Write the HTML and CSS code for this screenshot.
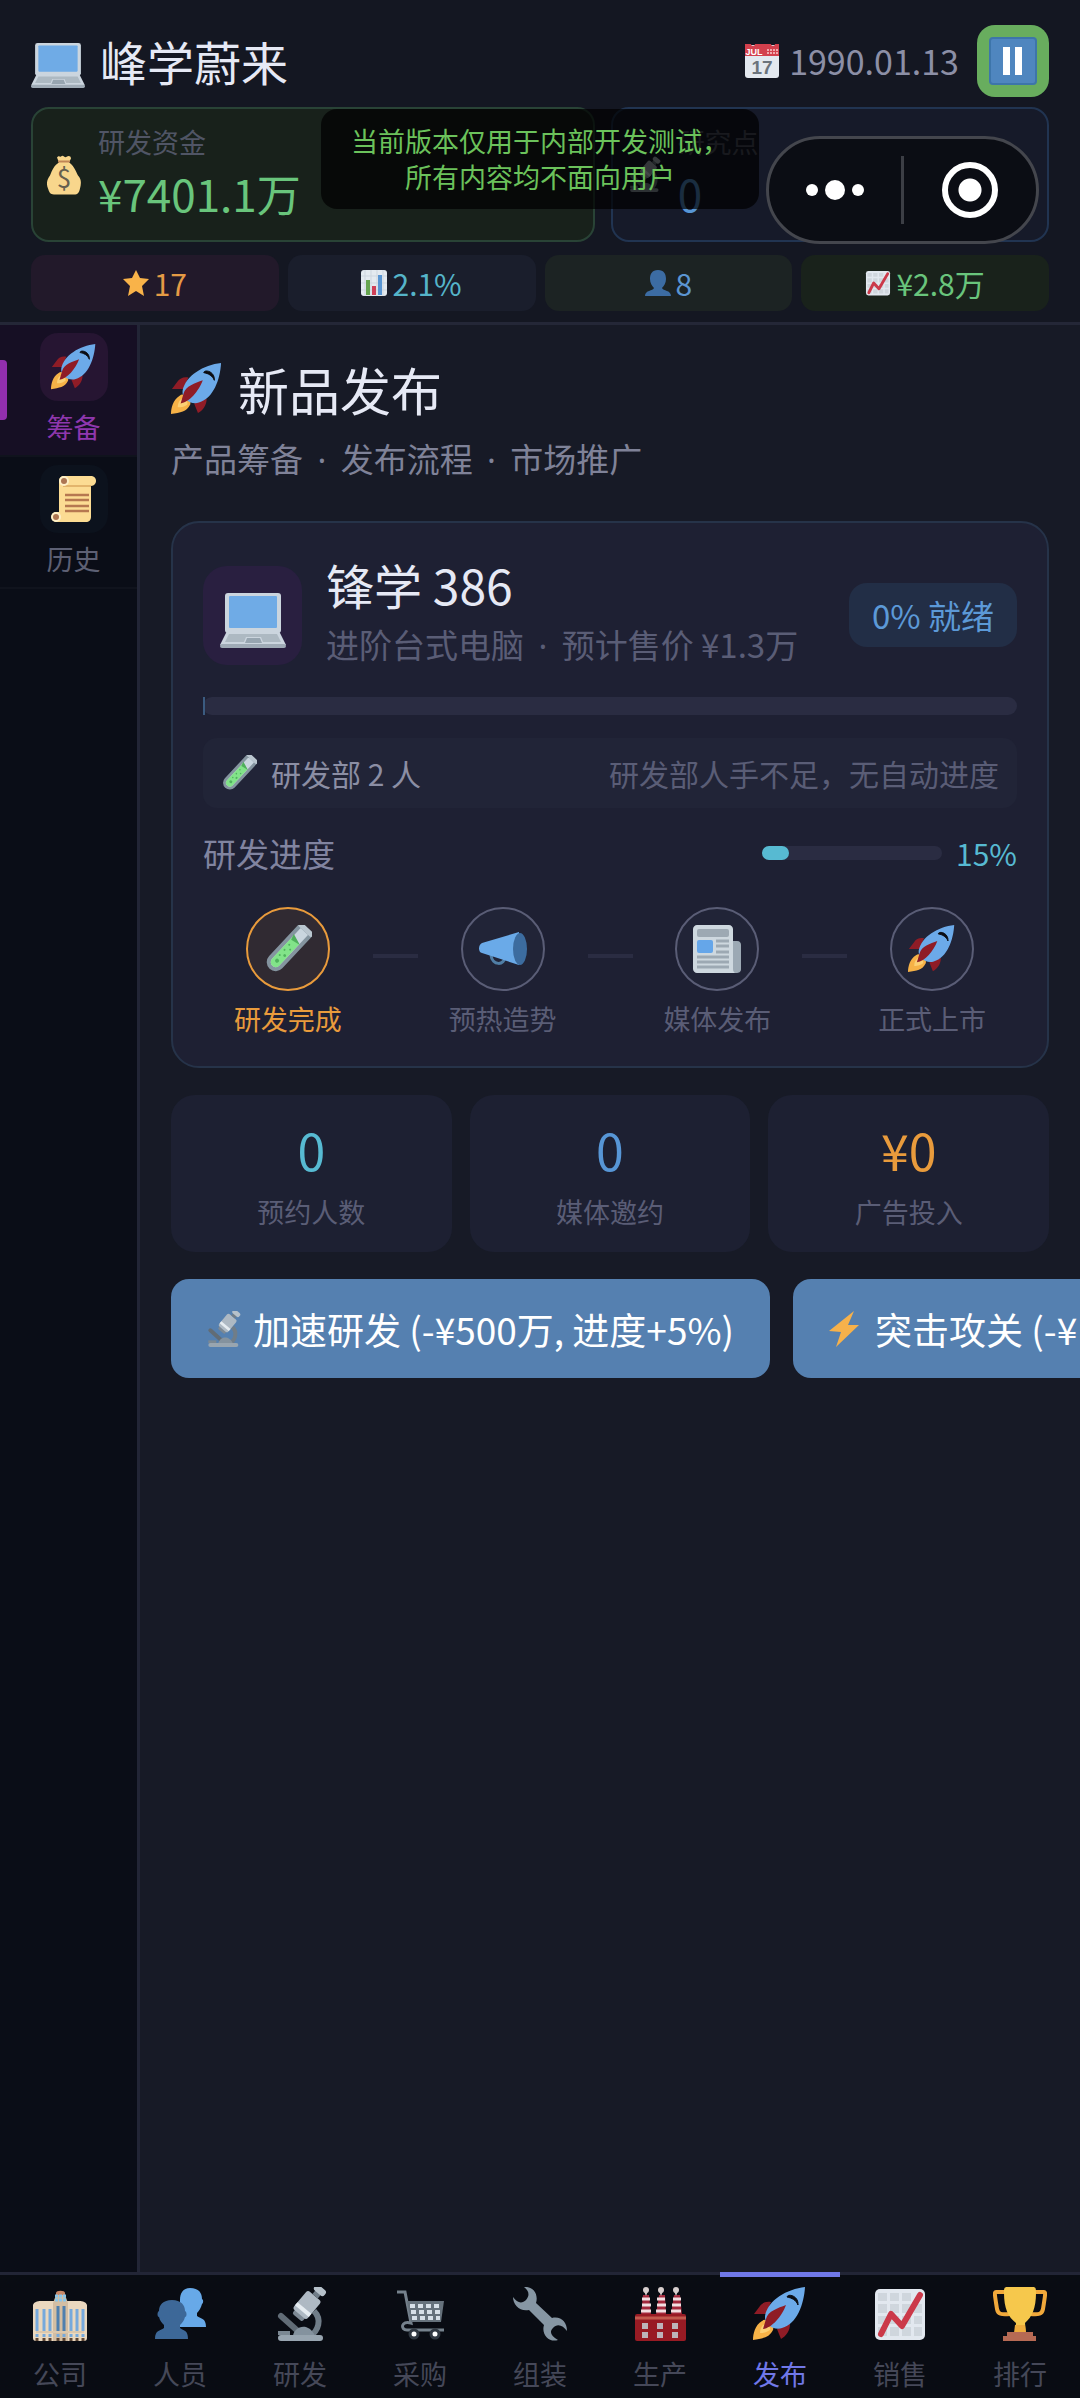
FILE: index.html
```html
<!DOCTYPE html>
<html lang="zh-CN">
<head>
  <meta charset="UTF-8" />
  <meta name="viewport" content="width=device-width, initial-scale=1.0"/>
  <title>峰学蔚来</title>
  <link rel="stylesheet" href="styles.css">
</head>
<body>
  <!-- icon sprite -->
  <svg class="sprite" aria-hidden="true">
    <symbol id="laptop" viewBox="0 -11 66 66">
      <rect x="5" y="0" width="56" height="40" rx="3" fill="#cbd5de"/>
      <rect x="9" y="3" width="48" height="32" rx="1" fill="#6fabe6"/>
      <path d="M7 38h52l7 14H0z" fill="#cbd5de"/>
      <path d="M9 41h48l4 8H43l-2-5H26l-2 5H5z" fill="#adb9c2"/>
      <path d="M27 45h13l2 5H25z" fill="#97a5b0"/>
      <rect x="0" y="51" width="66" height="4" rx="2" fill="#9fabb6"/>
    </symbol>
    <symbol id="moneybag" viewBox="0 0 34 39">
      <path d="M10 2c2-3 3 0 4-1s2-1 3 0 2 1 3 0 4-1 4 2l-2 4c5 3 7 9 9 13 4 4 3 9 2 13-1 4-2 6-6 6H7c-4 0-5-3-6-6-2-5-1-9 2-13 2-5 4-10 9-13z" fill="#f8d68c"/>
      <path d="M11 6h12" stroke="#c08556" stroke-width="2"/>
      <text x="17" y="32" text-anchor="middle" class="icon-dollar">$</text>
    </symbol>
    <symbol id="star" viewBox="0 0 26 26">
      <path d="M13 0l4 8 9 1-7 7 2 10-8-5-8 5 2-10-7-7 9-1z" fill="#f9b349"/>
    </symbol>
    <symbol id="bars" viewBox="0 0 26 26">
      <rect width="26" height="26" rx="3" fill="#e4eaf0"/>
      <path d="M4 0v26M10 0v26M16 0v26M22 0v26M0 6h26M0 13h26M0 20h26" stroke="#cdd6df" stroke-width="1"/>
      <path d="M5 10h4v15H5z" fill="#66a550"/><path d="M11 16h4v9h-4z" fill="#cf3f57"/><path d="M17 5h4v20h-4z" fill="#5a96d3"/>
    </symbol>
    <symbol id="person" viewBox="0 0 26 26">
      <path d="M13 0c6 0 8 4 8 9 0 4-2 7-4 9 1 3 9 2 9 8H0c0-6 8-5 9-8-2-2-4-5-4-9 0-5 2-9 8-9z" fill="#3c6ca3"/>
    </symbol>
    <symbol id="people" viewBox="0 0 54 54">
      <path d="M37 1c9 0 12 5 12 11 2 1 1 5 0 5-1 4-3 7-5 9v3c4 3 9 2 9 11H27V13C27 6 30 1 37 1z" fill="#67a9e8"/>
      <path d="M19 13c9 0 13 5 13 11 2 1 2 6 0 6-1 4-3 6-5 8v3c4 3 8 2 8 11H2c0-9 5-8 9-11v-3c-2-2-4-4-5-8-2 0-2-5 0-6 0-6 4-11 13-11z" fill="#3d6898"/>
    </symbol>
    <symbol id="chart" viewBox="0 0 54 54">
      <rect x="2" y="2" width="50" height="51" rx="5" fill="#e2e8ef"/>
      <g fill="#cfd6dd">
        <path d="M5 6h9v8H5zM17 6h9v8h-9zM29 6h9v8h-9zM5 17h9v9H5zM17 17h9v9h-9zM29 17h9v9h-9zM41 17h8v9h-8zM5 29h9v8H5zM17 29h9v8h-9zM29 29h9v8h-9zM41 29h8v8h-8zM5 40h9v9H5zM17 40h9v9h-9zM29 40h9v9h-9zM41 40h8v9h-8z"/>
      </g>
      <path d="M8 47l10-20 11 12L47 8" fill="none" stroke="#cb3949" stroke-width="6" stroke-linecap="round" stroke-linejoin="round"/>
    </symbol>
    <symbol id="calendar" viewBox="0 0 34 34">
      <rect y="1" width="34" height="33" rx="3" fill="#e3e8ef"/>
      <path d="M0 0h6a2 2 0 0 0 4 0h16a2 2 0 0 0 4 0h4v12H0z" fill="#d3404d"/>
      <path d="M22 6h11M22 9h11" stroke="#f0a9ad" stroke-width="2" stroke-dasharray="2 1"/>
      <text x="9" y="11" text-anchor="middle" class="icon-month">JUL</text>
      <text x="17" y="30" text-anchor="middle" class="icon-day">17</text>
    </symbol>
    <symbol id="pause" viewBox="0 0 48 48">
      <rect x="1" y="1" width="46" height="46" rx="3" fill="#4f86bf" stroke="#3d75aa" stroke-width="2"/>
      <path d="M14 10h7v28h-7zM26 10h7v28h-7z" fill="#fff"/>
    </symbol>
    <symbol id="rocket" viewBox="0 0 54 54">
      <path d="M18 15c-5-1-9 1-11 4L1 27h12zM24 42l4 10c5-3 9-8 9-15z" fill="#8f1c26"/>
      <path d="M9 34c4-4 13 3 11 9-4 8-10 8-20 10 0-6 2-15 9-19z" fill="#f6b247"/>
      <path d="M10 38c4-2 8 2 7 5-4 3-8 3-10 3 0-3 1-6 3-8z" fill="#fbd074"/>
      <path d="M52 0C34 2 15 13 12 29c-1 8 9 15 17 12C44 37 51 17 52 0z" fill="#6caae9"/>
      <path d="M33 18c-8 3-18 6-20 14l-3 10c9-1 19-13 23-24z" fill="#8f1c26"/>
      <path d="M34 10c1-4 12-1 11 8-2-5-6-7-11-8z" fill="#0b0d13" stroke="#0b0d13" stroke-width="1"/>
    </symbol>
    <symbol id="scroll" viewBox="0 0 46 46">
      <path d="M13 0h28c6 1 5 10-1 10v31c0 3-2 5-5 5H5c-6-1-6-10 0-10h3V5c0-3 2-5 5-5z" fill="#fcdc93"/>
      <path d="M12 10h28" stroke="#e3b56c" stroke-width="2"/>
      <circle cx="5" cy="41" r="5" fill="#fff0c8"/><circle cx="5" cy="41" r="3" fill="#ad7652"/>
      <circle cx="13" cy="5" r="5" fill="#fff0c8"/><circle cx="13" cy="5" r="3" fill="#ad7652"/>
      <path d="M14 19h24M14 24h24M14 30h24M14 35h24" stroke="#b67850" stroke-width="2.5"/>
    </symbol>
    <symbol id="tube" viewBox="0 0 48 48">
      <g transform="rotate(43 24 24)">
        <path d="M17-2h14v44a7 7 0 0 1-14 0z" fill="#c9d5de" stroke="#84949f" stroke-width="4"/>
        <path d="M19 10l10 3v29a5 5 0 0 1-10 0z" fill="#82e389"/>
        <path d="M18 9l12 4-10 2z" fill="#4fae5c"/>
        <rect x="15" y="-5" width="18" height="5" rx="2" fill="#bac6cf"/>
        <g fill="#50b25e"><circle cx="22" cy="20" r="1"/><circle cx="26" cy="23" r="1"/><circle cx="22" cy="27" r="1"/><circle cx="26" cy="31" r="1.4"/><circle cx="22" cy="34" r="1"/><circle cx="24" cy="40" r="2"/></g>
      </g>
    </symbol>
    <symbol id="megaphone" viewBox="0 0 48 48">
      <path d="M12 30c1 11 14 11 14 1" fill="none" stroke="#507ea5" stroke-width="3"/>
      <path d="M3 18L40 7v33L3 28c-4-1-4-8 0-10z" fill="#6aaae8"/>
      <ellipse cx="41" cy="24" rx="7" ry="16" fill="#3c6c9f"/>
    </symbol>
    <symbol id="news" viewBox="0 0 48 48">
      <path d="M36 16h8c3 0 4 2 4 4v24c0 3-2 4-5 4h-7z" fill="#9ca9b4"/>
      <path d="M4 0h32c2 0 4 2 4 4v40c0 2 1 4 3 4H4c-2 0-4-2-4-4V4c0-2 2-4 4-4z" fill="#ced8df"/>
      <rect x="4" y="4" width="32" height="8" rx="2" fill="#9da9b3"/>
      <rect x="4" y="15" width="16" height="13" rx="2" fill="#65a6e9"/>
      <path d="M23 16h13M23 21h13M23 27h13M4 32h32M4 37h32M4 42h32" stroke="#9da9b3" stroke-width="3"/>
    </symbol>
    <symbol id="microscope" viewBox="0 0 54 54">
      <path d="M41 24c8 8 5 20-5 26" fill="none" stroke="#707d88" stroke-width="6"/>
      <path d="M8 29l19 17" stroke="#616c76" stroke-width="6" stroke-linecap="round"/>
      <path d="M5 46h12" stroke="#7b8893" stroke-width="4"/>
      <path d="M20 49c1-9 15-15 22 0z" fill="#84929e"/>
      <rect x="5" y="48" width="45" height="6" rx="3" fill="#98a5b0"/>
      <g transform="rotate(40 34 18)">
        <rect x="28" y="26" width="13" height="8" rx="2" fill="#7d8994"/>
        <rect x="25" y="6" width="18" height="24" rx="3" fill="#aeb9c3"/>
        <rect x="25" y="22" width="18" height="4" fill="#e5ecf1"/>
        <rect x="31" y="-1" width="7" height="7" fill="#707d88"/>
        <rect x="28" y="-5" width="13" height="7" rx="3" fill="#b6c1ca"/>
      </g>
    </symbol>
    <symbol id="bolt" viewBox="0 0 36 36">
      <path d="M27 0L2 20l12 1L9 36l23-22H21z" fill="#f6b14b"/>
    </symbol>
    <symbol id="office" viewBox="0 0 54 54">
      <path d="M0 18c1-3 4-4 8-4h13v40H3c-2 0-3-1-3-3zM33 14h13c4 0 7 1 8 4v33c0 2-1 3-3 3H33z" fill="#ead8bf"/>
      <path d="M23 8c1-4 7-4 9 0l3 8v38H20V16z" fill="#d3bea3"/>
      <path d="M23 6c0-3 9-3 9 0v2h-9z" fill="#c88968"/>
      <path d="M22 9h11M22 13h11" stroke="#8ac6ea" stroke-width="3" stroke-dasharray="3 1"/>
      <path d="M4 22v22M11 22v22M17 22v22M38 22v22M44 22v22M50 22v22" stroke="#76a9dc" stroke-width="3"/>
      <path d="M25 19v25M31 19v25" stroke="#4e7fae" stroke-width="3"/>
      <path d="M3 45h48" stroke="#dcc8ad" stroke-width="2"/>
      <path d="M4 47v3M11 47v3M17 47v3M25 47v3M31 47v3M38 47v3M44 47v3M50 47v3" stroke="#76a9dc" stroke-width="3"/>
      <path d="M4 51v3M11 51v3M17 51v3M25 51v3M31 51v3M38 51v3M44 51v3M50 51v3" stroke="#5c4636" stroke-width="3"/>
    </symbol>
    <symbol id="cart" viewBox="0 0 54 54">
      <path d="M4 5h8l6 31c-10-3-11 7-4 7h37" fill="none" stroke="#75818c" stroke-width="3"/>
      <path d="M14 14h37l-3 21H18z" fill="#66727c"/>
      <path d="M17 19h32M18 25h30M19 31h28" stroke="#d7e0e8" stroke-width="4" stroke-dasharray="5 3"/>
      <circle cx="21" cy="47" r="4" fill="#fff" stroke="#303842" stroke-width="3"/>
      <circle cx="42" cy="47" r="4" fill="#fff" stroke="#303842" stroke-width="3"/>
    </symbol>
    <symbol id="wrench" viewBox="0 0 54 54">
      <path d="M11 0c8-1 15 6 12 16l16 15c9-2 15 4 15 13-4-6-10-8-14-3-4 4-2 8 5 12-9 3-17-6-14-15L16 23C7 25 0 18 0 10c4 6 9 7 13 3 4-5 3-9-2-13z" fill="#8696a3"/>
    </symbol>
    <symbol id="factory" viewBox="0 0 54 54">
      <path d="M10 8h6l2 20H8zM26 8h6l1 20H23zM41 8h6l2 20H38z" fill="#a3283c"/>
      <path d="M9 12h8M9 18h9M8 24h10M24 12h8M24 18h9M23 24h10M40 12h8M39 18h9M38 24h10" stroke="#f2dfe2" stroke-width="3"/>
      <g fill="#d8cfce"><circle cx="13" cy="3" r="3"/><circle cx="28" cy="3" r="3"/><circle cx="43" cy="3" r="3"/><path d="M11 4h4l-2 5zM26 4h4l-2 5zM41 4h4l-2 5z"/></g>
      <rect x="2" y="27" width="51" height="27" rx="2" fill="#981b24"/>
      <path d="M2 31h51" stroke="#c25a4e" stroke-width="3"/>
      <path d="M9 36h6v6H9zM24 36h6v6h-6zM39 36h6v6h-6zM9 45h6v6H9zM24 45h6v6h-6zM39 45h6v6h-6z" fill="#bdb4ba"/>
    </symbol>
    <symbol id="trophy" viewBox="0 0 54 54">
      <path d="M14 5H3c-2 0-1 4 1 17 1 5 4 6 13 5M40 5h11c2 0 1 4-1 17-1 5-4 6-13 5" fill="none" stroke="#f1a93b" stroke-width="4"/>
      <path d="M14 0h26c3 0 3 2 3 6 0 15-4 24-11 30l1 11H22l1-11C15 30 11 21 11 6c0-4 0-6 3-6z" fill="#f6c84c"/>
      <path d="M22 38h10l1 8H21z" fill="#efad3c"/>
      <path d="M14 45h26v4h3v5H10v-5h4z" fill="#b66a54"/>
    </symbol>
  </svg>

  <header class="header">
    <div class="title-row">
      <h1 class="brand"><svg class="icon icon-lg"><use href="#laptop"/></svg>峰学蔚来</h1>
      <div class="clock">
        <span class="date"><svg class="icon icon-date"><use href="#calendar"/></svg>1990.01.13</span>
        <button class="pause" aria-label="暂停"><svg class="icon icon-pause"><use href="#pause"/></svg></button>
      </div>
    </div>
    <div class="resources">
      <div class="resource money">
        <svg class="icon icon-res"><use href="#moneybag"/></svg>
        <div><div class="resource-label">研发资金</div><div class="resource-value">¥7401.1万</div></div>
      </div>
      <div class="resource points">
        <svg class="icon icon-res"><use href="#microscope"/></svg>
        <div><div class="resource-label">研究点</div><div class="resource-value">0</div></div>
      </div>
    </div>
    <div class="pills">
      <div class="pill pill-star"><svg class="icon icon-pill"><use href="#star"/></svg>17</div>
      <div class="pill pill-share"><svg class="icon icon-pill"><use href="#bars"/></svg>2.1%</div>
      <div class="pill pill-staff"><svg class="icon icon-pill"><use href="#person"/></svg>8</div>
      <div class="pill pill-income"><svg class="icon icon-pill"><use href="#chart"/></svg>¥2.8万</div>
    </div>

    <!-- overlays above the header -->
    <div class="notice">当前版本仅用于内部开发测试，<br>所有内容均不面向用户</div>
    <div class="capsule">
      <button class="capsule-btn" aria-label="更多"><i class="dot"></i><i class="dot dot-big"></i><i class="dot"></i></button>
      <span class="capsule-line"></span>
      <button class="capsule-btn" aria-label="关闭"><i class="target"></i></button>
    </div>
  </header>

  <div class="body">
    <aside class="sidebar">
      <button class="side-item active"><span class="side-icon"><svg class="icon icon-side"><use href="#rocket"/></svg></span>筹备</button>
      <button class="side-item"><span class="side-icon"><svg class="icon icon-side"><use href="#scroll"/></svg></span>历史</button>
    </aside>

    <main class="content">
      <h2 class="page-title"><svg class="icon icon-title"><use href="#rocket"/></svg>新品发布</h2>
      <p class="page-sub">产品筹备 <span class="sep">·</span> 发布流程 <span class="sep">·</span> 市场推广</p>

      <section class="product">
        <div class="product-head">
          <div class="product-icon"><svg class="icon icon-product"><use href="#laptop"/></svg></div>
          <div class="product-info">
            <h3 class="product-name">锋学 386</h3>
            <p class="product-sub">进阶台式电脑 <span class="sep">·</span> 预计售价 ¥1.3万</p>
          </div>
          <span class="badge">0% 就绪</span>
        </div>
        <div class="progress"><div class="progress-fill"></div></div>
        <div class="team">
          <span class="team-size"><svg class="icon icon-team"><use href="#tube"/></svg>研发部 2 人</span>
          <span class="team-note">研发部人手不足，无自动进度</span>
        </div>
        <div class="rd">
          <span class="rd-label">研发进度</span>
          <div class="rd-bar"><div class="rd-fill" style="width: 15%"></div></div>
          <span class="rd-value">15%</span>
        </div>
        <div class="steps">
          <div class="step active"><span class="step-icon"><svg class="icon icon-step"><use href="#tube"/></svg></span>研发完成</div>
          <span class="step-line"></span>
          <div class="step"><span class="step-icon"><svg class="icon icon-step"><use href="#megaphone"/></svg></span>预热造势</div>
          <span class="step-line"></span>
          <div class="step"><span class="step-icon"><svg class="icon icon-step"><use href="#news"/></svg></span>媒体发布</div>
          <span class="step-line"></span>
          <div class="step"><span class="step-icon"><svg class="icon icon-step"><use href="#rocket"/></svg></span>正式上市</div>
        </div>
      </section>

      <section class="stats">
        <div class="stat"><div class="stat-value cyan">0</div><div class="stat-label">预约人数</div></div>
        <div class="stat"><div class="stat-value blue">0</div><div class="stat-label">媒体邀约</div></div>
        <div class="stat"><div class="stat-value orange">¥0</div><div class="stat-label">广告投入</div></div>
      </section>

      <div class="actions">
        <button class="action"><svg class="icon icon-action"><use href="#microscope"/></svg>加速研发 (-¥500万, 进度+5%)</button>
        <button class="action"><svg class="icon icon-action"><use href="#bolt"/></svg>突击攻关 (-¥</button>
      </div>
    </main>
  </div>

  <nav class="tabs">
    <a class="tab" href="#company"><svg class="icon icon-lg"><use href="#office"/></svg>公司</a>
    <a class="tab" href="#staff"><svg class="icon icon-lg"><use href="#people"/></svg>人员</a>
    <a class="tab" href="#research"><svg class="icon icon-lg"><use href="#microscope"/></svg>研发</a>
    <a class="tab" href="#purchase"><svg class="icon icon-lg"><use href="#cart"/></svg>采购</a>
    <a class="tab" href="#assembly"><svg class="icon icon-lg"><use href="#wrench"/></svg>组装</a>
    <a class="tab" href="#production"><svg class="icon icon-lg"><use href="#factory"/></svg>生产</a>
    <a class="tab active" href="#release"><svg class="icon icon-lg"><use href="#rocket"/></svg>发布</a>
    <a class="tab" href="#sales"><svg class="icon icon-lg"><use href="#chart"/></svg>销售</a>
    <a class="tab" href="#ranking"><svg class="icon icon-lg"><use href="#trophy"/></svg>排行</a>
  </nav>
</body>
</html>
```
FILE: styles.css
```css
* {
  box-sizing: border-box;
}

body {
  margin: 0;
  min-height: 100vh;
  display: flex;
  flex-direction: column;
  overflow-x: hidden;
  background-color: #171a26;
  color: #e6e9f5;
  font-family: "Noto Sans CJK SC", sans-serif;
  font-size: 27px;
  line-height: 36px;
}

h1, h2, h3, p {
  margin: 0;
  font-weight: normal;
}

button {
  font: inherit;
  color: inherit;
  border: none;
  padding: 0;
  background: none;
  cursor: pointer;
}

/* icons */
.sprite {
  display: none;
}

.icon {
  display: block;
  flex: none;
}

.icon-lg { width: 54px; height: 54px; }
.icon-date { width: 34px; height: 34px; }
.icon-pause { width: 48px; height: 48px; }
.icon-res { width: 34px; height: 40px; }
.icon-pill { width: 26px; height: 26px; }
.icon-side { width: 46px; height: 46px; }
.icon-title { width: 52px; height: 52px; }
.icon-product { width: 66px; height: 66px; }
.icon-team { width: 36px; height: 36px; }
.icon-step { width: 48px; height: 48px; }
.icon-action { width: 36px; height: 36px; }

.icon-dollar {
  font: 26px "Noto Sans CJK SC", sans-serif;
  fill: #66604f;
}

.icon-month {
  font: bold 9px "Liberation Sans", sans-serif;
  fill: #fff;
}

.icon-day {
  font: bold 19px "Liberation Sans", sans-serif;
  fill: #6b737c;
}

/* header */
.header {
  position: relative;
  padding: 25px 31px 11px;
  background-color: #141722;
  border-bottom: 3px solid #242737;
}

.title-row {
  display: flex;
  align-items: center;
  justify-content: space-between;
  height: 72px;
}

.brand {
  display: flex;
  align-items: center;
  gap: 15px;
  font-size: 47px;
  line-height: 54px;
}

.clock,
.date {
  display: flex;
  align-items: center;
}

.clock {
  gap: 18px;
}

.date {
  gap: 10px;
  font-size: 34px;
  color: #8c8fa6;
}

.pause {
  display: flex;
  align-items: center;
  justify-content: center;
  width: 72px;
  height: 72px;
  border-radius: 18px;
  background-color: #68ad5e;
}

.resources {
  display: grid;
  grid-template-columns: 9fr 7fr;
  gap: 16px;
  margin-top: 10px;
}

.resource {
  display: flex;
  align-items: center;
  gap: 17px;
  height: 135px;
  padding: 0 14px;
  border: 2px solid;
  border-radius: 18px;
}

.money {
  background-color: #18211b;
  border-color: #294336;
  color: #69c57c;
}

.points {
  background-color: #161a29;
  border-color: #213451;
  color: #5796d6;
}

.resource-label {
  color: #505565;
}

.resource-value {
  font-size: 44px;
  line-height: 66px;
}

.pills {
  display: grid;
  grid-template-columns: repeat(4, 1fr);
  gap: 9px;
  margin-top: 13px;
}

.pill {
  display: flex;
  align-items: center;
  justify-content: center;
  gap: 5px;
  height: 56px;
  border-radius: 14px;
  font-size: 30px;
}

.pill-star { background-color: #22192a; color: #e59b45; }
.pill-share { background-color: #1a1e2c; color: #55b4c9; }
.pill-staff { background-color: #1c2323; color: #5b95d1; }
.pill-income { background-color: #19221b; color: #69c57c; }

.notice {
  position: absolute;
  top: 109px;
  left: 50%;
  transform: translateX(-50%);
  padding: 14px 30px;
  border-radius: 16px;
  background-color: rgba(0, 0, 0, 0.7);
  color: #6bc25b;
  text-align: center;
  white-space: nowrap;
}

.capsule {
  position: absolute;
  top: 136px;
  right: 41px;
  display: flex;
  align-items: center;
  width: 273px;
  height: 108px;
  border: 3px solid #44464d;
  border-radius: 54px;
  background-color: #0b0d14;
}

.capsule-btn {
  flex: 1;
  display: flex;
  align-items: center;
  justify-content: center;
  gap: 7px;
  height: 100%;
}

.capsule-line {
  width: 3px;
  height: 68px;
  background-color: #3c3e45;
}

.dot {
  width: 12px;
  height: 12px;
  border-radius: 50%;
  background-color: #fff;
}

.dot-big {
  width: 20px;
  height: 20px;
}

.target {
  width: 56px;
  height: 56px;
  border: 6px solid #fff;
  border-radius: 50%;
  background: radial-gradient(circle, #fff 11px, transparent 12px);
}

/* sidebar + content */
.body {
  flex: 1;
  display: flex;
  min-width: 0;
}

.sidebar {
  flex: none;
  width: 140px;
  background-color: #0a0d17;
  border-right: 3px solid #222536;
}

.side-item {
  position: relative;
  display: flex;
  flex-direction: column;
  align-items: center;
  gap: 8px;
  width: 100%;
  padding: 8px 0 10px 10px;
  border-bottom: 2px solid #10131d;
  color: #5d6074;
}

.side-icon {
  display: flex;
  align-items: center;
  justify-content: center;
  width: 68px;
  height: 68px;
  border-radius: 18px;
  background-color: #0c121d;
}

.side-item.active {
  background-color: #160f24;
  color: #8f37ae;
}

.side-item.active .side-icon {
  background-color: #261532;
}

.side-item.active::before {
  content: "";
  position: absolute;
  left: 0;
  top: 35px;
  width: 7px;
  height: 60px;
  border-radius: 0 4px 4px 0;
  background-color: #922fae;
}

.content {
  flex: 1;
  min-width: 0;
  padding: 29px 31px;
}

.page-title {
  display: flex;
  align-items: center;
  gap: 15px;
  font-size: 51px;
  line-height: 70px;
}

.page-sub {
  margin-top: 14px;
  font-size: 33px;
  line-height: 40px;
  color: #7f8298;
}

.sep {
  margin: 0 7px;
  font-family: "Noto Sans", sans-serif;
}

.product {
  margin-top: 41px;
  padding: 31px 30px 29px;
  border: 2px solid #263349;
  border-radius: 28px;
  background-color: #1e2033;
}

.product-head {
  display: flex;
  align-items: center;
}

.product-icon {
  display: flex;
  align-items: center;
  justify-content: center;
  width: 99px;
  height: 99px;
  margin-right: 24px;
  border-radius: 24px;
  background-color: #291f40;
}

.product-info {
  flex: 1;
}

.product-name {
  font-size: 48px;
  line-height: 60px;
}

.product-sub {
  font-size: 33px;
  line-height: 60px;
  color: #5a5d76;
}

.badge {
  padding: 14px 23px;
  border-radius: 18px;
  background-color: #222e46;
  color: #5c99d7;
  font-size: 33px;
}

.progress {
  height: 18px;
  margin-top: 21px;
  border-radius: 9px;
  background-color: #2a2c42;
}

.progress-fill {
  width: 2px;
  height: 100%;
  background-color: #3b5b80;
}

.team {
  display: flex;
  align-items: center;
  justify-content: space-between;
  height: 70px;
  margin-top: 23px;
  padding: 0 18px;
  border-radius: 14px;
  background-color: #212437;
  font-size: 30px;
}

.team-size {
  display: flex;
  align-items: center;
  gap: 14px;
  color: #8b8ea4;
}

.team-note {
  color: #5a5d76;
}

.rd {
  display: flex;
  align-items: center;
  margin-top: 25px;
  font-size: 33px;
  line-height: 40px;
}

.rd-label {
  flex: 1;
  color: #8184a0;
}

.rd-bar {
  width: 180px;
  height: 14px;
  margin-right: 14px;
  border-radius: 7px;
  background-color: #2a2c42;
}

.rd-fill {
  height: 100%;
  border-radius: 7px;
  background-color: #57bad2;
}

.rd-value {
  font-size: 30px;
  color: #57bad2;
}

.steps {
  display: flex;
  align-items: center;
  margin-top: 34px;
}

.step {
  flex: 1;
  display: flex;
  flex-direction: column;
  align-items: center;
  gap: 10px;
  color: #5a5d76;
}

.step-icon {
  display: flex;
  align-items: center;
  justify-content: center;
  width: 84px;
  height: 84px;
  border: 2px solid #5a5d76;
  border-radius: 50%;
  background-color: #212437;
}

.step.active {
  color: #e99b3c;
}

.step.active .step-icon {
  border-color: #e99b3c;
  background-color: #302a32;
}

.step-line {
  width: 45px;
  height: 4px;
  margin-bottom: 32px;
  background-color: #2a2c42;
}

.stats {
  display: grid;
  grid-template-columns: repeat(3, 1fr);
  gap: 18px;
  margin-top: 27px;
}

.stat {
  padding: 22px 0;
  border-radius: 24px;
  background-color: #1d2032;
  text-align: center;
}

.stat-value {
  font-size: 50px;
  line-height: 64px;
}

.stat-label {
  margin-top: 13px;
  color: #5a5d76;
}

.cyan { color: #57bad2; }
.blue { color: #5796d6; }
.orange { color: #e99b3c; }

.actions {
  display: flex;
  gap: 23px;
  margin-top: 27px;
  margin-right: -31px;
  overflow: hidden;
}

.action {
  flex: none;
  display: flex;
  align-items: center;
  gap: 12px;
  min-width: 599px;
  height: 99px;
  padding: 0 34px;
  border-radius: 18px;
  background-color: #5580b0;
  color: #fff;
  font-size: 37px;
}

/* bottom tabs */
.tabs {
  display: flex;
  background-color: #090c13;
  border-top: 3px solid #222536;
}

.tab {
  flex: 1;
  display: flex;
  flex-direction: column;
  align-items: center;
  gap: 15px;
  padding: 12px 0 6px;
  color: #454858;
  text-decoration: none;
}

.tab.active {
  margin-top: -3px;
  padding-top: 10px;
  border-top: 5px solid #7078e8;
  color: #7078e8;
}
```
